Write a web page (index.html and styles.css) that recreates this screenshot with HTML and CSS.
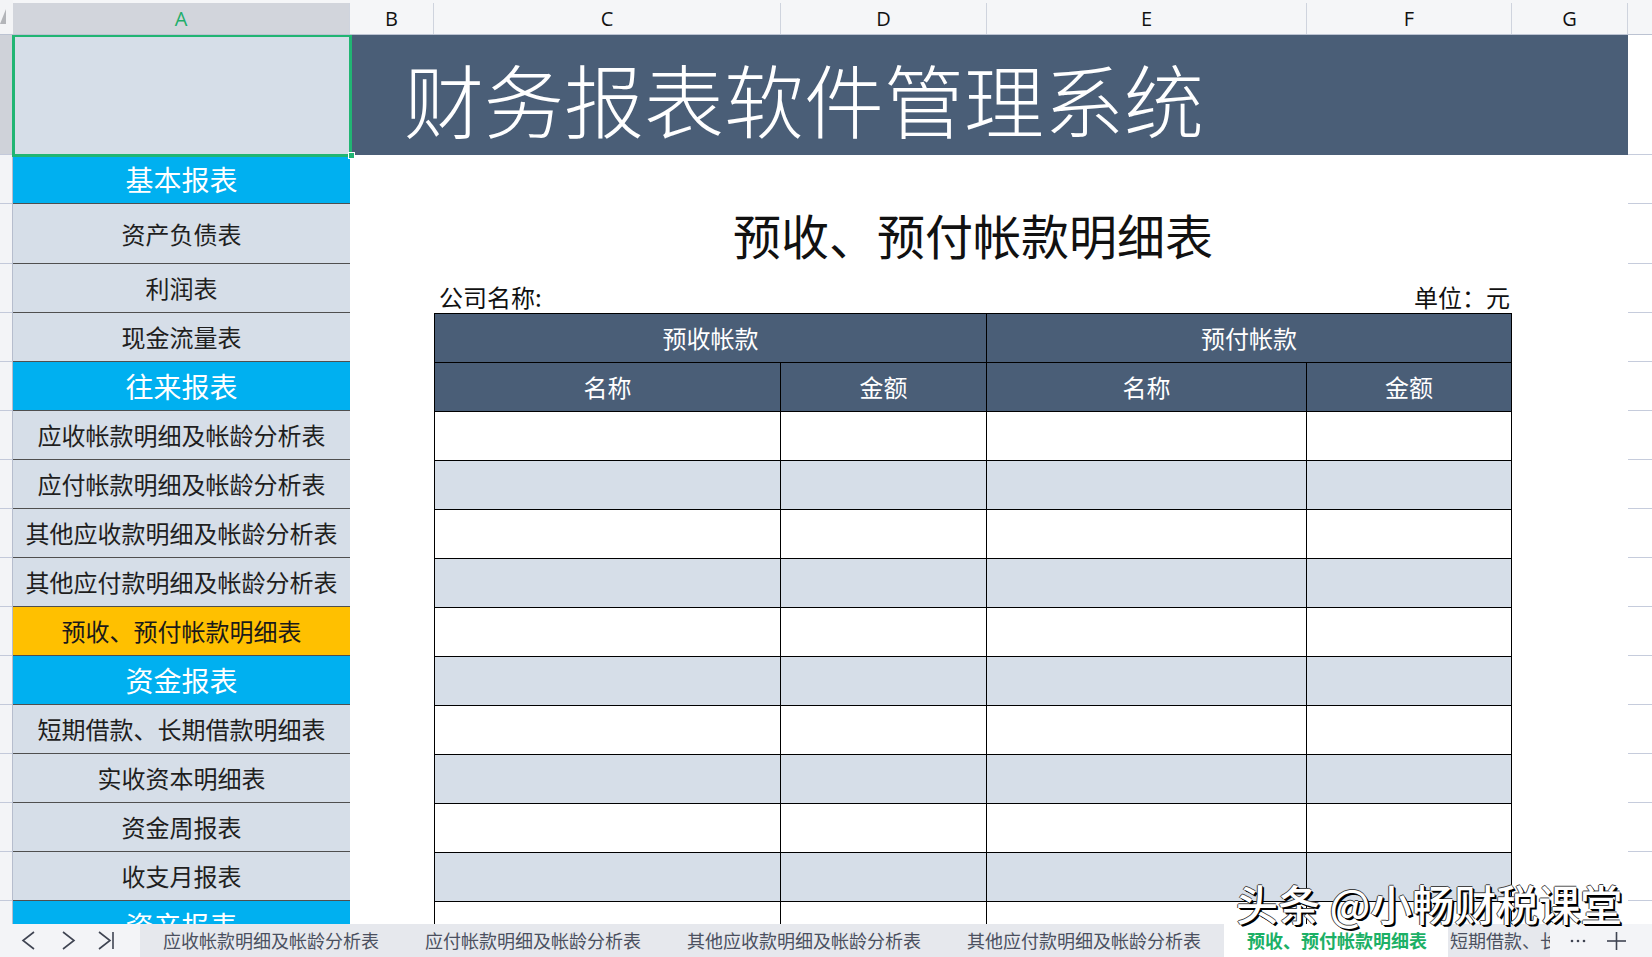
FILE: index.html
```html
<!DOCTYPE html>
<html lang="zh-CN">
<head>
<meta charset="utf-8">
<title>财务报表软件管理系统</title>
<link rel="stylesheet" href="styles.css">
</head>
<body>
<div class="app">
  <div class="colheads">
    <div class="ch corner"><svg width="13" height="32" viewBox="0 0 13 32"><polygon points="0,24 6,9 6,24" fill="#b3b5b9"/></svg></div>
    <div class="ch ch-a">A</div>
    <div class="ch w-b">B</div>
    <div class="ch w-c">C</div>
    <div class="ch w-d">D</div>
    <div class="ch w-e">E</div>
    <div class="ch w-f">F</div>
    <div class="ch w-g">G</div>
    <div class="ch w-rest"></div>
  </div>

  <div class="body">
    <div class="rowheads">
      <div class="rh h120 rh-sel"></div>
      <div class="rh h49"></div>
      <div class="rh h60"></div>
      <div class="rh h49"></div><div class="rh h49"></div><div class="rh h49"></div><div class="rh h49"></div>
      <div class="rh h49"></div><div class="rh h49"></div><div class="rh h49"></div><div class="rh h49"></div>
      <div class="rh h49"></div><div class="rh h49"></div><div class="rh h49"></div><div class="rh h49"></div>
      <div class="rh h49"></div><div class="rh h49"></div>
    </div>

    <div class="colA">
      <div class="ca h120 a1"><span class="handle"></span></div>
      <div class="ca h49 sec">基本报表</div>
      <div class="ca h60">资产负债表</div>
      <div class="ca h49">利润表</div>
      <div class="ca h49">现金流量表</div>
      <div class="ca h49 sec">往来报表</div>
      <div class="ca h49">应收帐款明细及帐龄分析表</div>
      <div class="ca h49">应付帐款明细及帐龄分析表</div>
      <div class="ca h49">其他应收款明细及帐龄分析表</div>
      <div class="ca h49">其他应付款明细及帐龄分析表</div>
      <div class="ca h49 cur">预收、预付帐款明细表</div>
      <div class="ca h49 sec">资金报表</div>
      <div class="ca h49">短期借款、长期借款明细表</div>
      <div class="ca h49">实收资本明细表</div>
      <div class="ca h49">资金周报表</div>
      <div class="ca h49">收支月报表</div>
      <div class="ca h49 sec">资产报表</div>
    </div>

    <div class="main">
      <div class="banner">财务报表软件管理系统</div>
      <div class="content">
        <div class="spacer"></div>
        <div class="title">预收、预付帐款明细表</div>
        <div class="info"><span>公司名称:</span><span>单位：元</span></div>
        <div class="tbl">
          <div class="th span2 first">预收帐款</div>
          <div class="th span2">预付帐款</div>
          <div class="th first">名称</div>
          <div class="th">金额</div>
          <div class="th">名称</div>
          <div class="th">金额</div>

          <div class="td first"></div><div class="td"></div><div class="td"></div><div class="td"></div>
          <div class="td first alt"></div><div class="td alt"></div><div class="td alt"></div><div class="td alt"></div>
          <div class="td first"></div><div class="td"></div><div class="td"></div><div class="td"></div>
          <div class="td first alt"></div><div class="td alt"></div><div class="td alt"></div><div class="td alt"></div>
          <div class="td first"></div><div class="td"></div><div class="td"></div><div class="td"></div>
          <div class="td first alt"></div><div class="td alt"></div><div class="td alt"></div><div class="td alt"></div>
          <div class="td first"></div><div class="td"></div><div class="td"></div><div class="td"></div>
          <div class="td first alt"></div><div class="td alt"></div><div class="td alt"></div><div class="td alt"></div>
          <div class="td first"></div><div class="td"></div><div class="td"></div><div class="td"></div>
          <div class="td first alt"></div><div class="td alt"></div><div class="td alt"></div><div class="td alt"></div>
          <div class="td first"></div><div class="td"></div><div class="td"></div><div class="td"></div>
        </div>
      </div>
    </div>

    <div class="rest">
      <div class="rl h120"></div>
      <div class="rl h49"></div>
      <div class="rl h60"></div>
      <div class="rl h49"></div><div class="rl h49"></div><div class="rl h49"></div><div class="rl h49"></div>
      <div class="rl h49"></div><div class="rl h49"></div><div class="rl h49"></div><div class="rl h49"></div>
      <div class="rl h49"></div><div class="rl h49"></div><div class="rl h49"></div><div class="rl h49"></div>
      <div class="rl h49"></div><div class="rl h49"></div>
    </div>
  </div>

  <div class="tabbar">
    <div class="nav">
      <svg width="140" height="33" viewBox="0 0 140 33">
        <polyline points="34,8 23,16.5 34,25" fill="none" stroke="#3f4452" stroke-width="1.6"/>
        <polyline points="63,8 74,16.5 63,25" fill="none" stroke="#3f4452" stroke-width="1.6"/>
        <polyline points="99,8 110,16.5 99,25" fill="none" stroke="#3f4452" stroke-width="1.6"/>
        <line x1="113" y1="8" x2="113" y2="25" stroke="#3f4452" stroke-width="1.6"/>
      </svg>
    </div>
    <div class="tabs">
      <div class="tab">应收帐款明细及帐龄分析表</div>
      <div class="tab">应付帐款明细及帐龄分析表</div>
      <div class="tab">其他应收款明细及帐龄分析表</div>
      <div class="tab">其他应付款明细及帐龄分析表</div>
      <div class="tab active">预收、预付帐款明细表</div>
      <div class="tab next">短期借款、长期借款明细表</div>
    </div>
    <div class="more">
      <svg width="102" height="33" viewBox="0 0 102 33">
        <circle cx="22" cy="17" r="1.3" fill="#3f4452"/>
        <circle cx="28" cy="17" r="1.3" fill="#3f4452"/>
        <circle cx="34" cy="17" r="1.3" fill="#3f4452"/>
        <line x1="57" y1="17" x2="76" y2="17" stroke="#3f4452" stroke-width="1.6"/>
        <line x1="66.5" y1="8" x2="66.5" y2="26" stroke="#3f4452" stroke-width="1.6"/>
      </svg>
    </div>
  </div>

  <div class="watermark">头条 @小畅财税课堂</div>
</div>
</body>
</html>
```

FILE: styles.css
```css
* { box-sizing: border-box; }

html, body {
  margin: 0;
  padding: 0;
  background: #ffffff;
}

body {
  font-family: "Noto Sans CJK SC", "Noto Sans", sans-serif;
  overflow: hidden;
}

.app {
  position: relative;
  width: 1652px;
  height: 957px;
  display: flex;
  flex-direction: column;
  overflow: hidden;
}

/* ---------- column headers ---------- */
.colheads {
  height: 35px;
  flex: none;
  display: flex;
  padding-top: 3px;
  background: #f5f6f8;
  border-bottom: 1px solid #bcc3d2;
}

.ch {
  height: 31px;
  flex: none;
  display: flex;
  align-items: center;
  justify-content: center;
  border-right: 1px solid #cfd4de;
  font-family: "Open Sans", "Noto Sans", sans-serif;
  font-size: 20px;
  color: #111;
  line-height: 1;
}

.corner {
  width: 13px;
  margin-top: -3px;
  height: 34px;
  border-right: none;
  background: #f3f4f6;
  align-items: flex-start;
  justify-content: flex-start;
}

.ch-a { width: 337px; background: #d2d5dc; color: #1fae6a; }
.w-b { width: 84px; }
.w-c { width: 347px; }
.w-d { width: 206px; }
.w-e { width: 320px; }
.w-f { width: 205px; }
.w-g { width: 116px; }
.w-rest { width: 24px; border-right: none; }

/* ---------- body ---------- */
.body {
  flex: none;
  height: 889px;
  display: flex;
  overflow: hidden;
}

.h120 { height: 120px; }
.h60 { height: 60px; }
.h49 { height: 49px; }

.rowheads {
  width: 13px;
  flex: none;
  background: #f3f4f7;
  border-right: 1px solid #b6bdcd;
}

.rh {
  border-bottom: 1px solid #c3c9da;
}

.rh-sel { background: #cfd2d9; }

/* column A navigation */
.colA {
  width: 337px;
  flex: none;
  display: flex;
  flex-direction: column;
}

.ca {
  flex: none;
  display: flex;
  align-items: center;
  justify-content: center;
  background: #d6dee8;
  border-bottom: 1px solid #4f4f4f;
  font-size: 24px;
  line-height: 1;
  color: #1f1f1f;
  white-space: nowrap;
}

.ca.sec {
  background: #00b0f0;
  color: #ffffff;
  font-size: 28px;
}

.ca.cur {
  background: #ffc000;
  color: #1a1a1a;
}

.a1 {
  position: relative;
  border-bottom: none;
}

.a1::after {
  content: "";
  position: absolute;
  left: -1px;
  top: -1px;
  right: -2px;
  bottom: -2px;
  border: 3px solid #21b573;
  z-index: 2;
}

.handle {
  position: absolute;
  right: -5px;
  bottom: -4px;
  width: 7px;
  height: 7px;
  background: #21b573;
  border: 1px solid #ffffff;
  z-index: 3;
}

/* ---------- main sheet area ---------- */
.main {
  width: 1278px;
  flex: none;
  display: flex;
  flex-direction: column;
  background: #ffffff;
}

.banner {
  height: 120px;
  flex: none;
  background: #4a5e77;
  color: #ffffff;
  font-size: 80px;
  font-weight: 300;
  line-height: 120px;
  padding: 2px 0 0 54px;
  white-space: nowrap;
}

.content {
  padding-left: 84px;
  width: 1162px;
  display: flex;
  flex-direction: column;
}

.spacer { height: 49px; flex: none; }

.title {
  height: 60px;
  flex: none;
  display: flex;
  align-items: center;
  justify-content: center;
  font-size: 48px;
  font-weight: 400;
  line-height: 1;
  color: #111;
}

.info {
  height: 49px;
  flex: none;
  display: flex;
  justify-content: space-between;
  align-items: flex-end;
  padding: 0 2px 4px 5px;
  font-size: 24px;
  line-height: 24px;
  color: #111;
}

/* table */
.tbl {
  display: grid;
  grid-template-columns: 347px 206px 320px 205px;
  grid-auto-rows: 49px;
  border-top: 1px solid #000;
}

.th, .td {
  border-right: 1px solid #000;
  border-bottom: 1px solid #000;
}

.first { border-left: 1px solid #000; }

.th {
  background: #4a5e77;
  color: #ffffff;
  display: flex;
  align-items: center;
  justify-content: center;
  font-size: 24px;
  line-height: 1;
}

.span2 { grid-column: span 2; }

.td { background: #ffffff; }
.td.alt { background: #d6dee8; }

/* right strip beyond column G */
.rest {
  width: 24px;
  flex: none;
  background: #ffffff;
}

.rl { border-bottom: 1px solid #c6ccdc; }

/* ---------- sheet tabs ---------- */
.tabbar {
  flex: none;
  height: 33px;
  display: flex;
  background: #e6e8ed;
}

.nav {
  width: 140px;
  flex: none;
  background: #f3f4f7;
}

.nav svg, .more svg { display: block; }

.tabs {
  width: 1410px;
  flex: none;
  display: flex;
  overflow: hidden;
  white-space: nowrap;
}

.tab {
  flex: none;
  padding: 0 23px;
  font-size: 18px;
  line-height: 33px;
  color: #4b5060;
}

.tab.active {
  background: #ffffff;
  color: #1cb066;
  font-weight: 700;
  padding: 0 21px 0 23px;
}

.tab.next { padding-left: 2px; }

.more {
  width: 102px;
  flex: none;
  background: #f3f4f7;
}

/* ---------- watermark overlay ---------- */
.watermark {
  position: absolute;
  left: 1236px;
  top: 882px;
  font-size: 42px;
  line-height: 1;
  font-weight: 500;
  color: #ffffff;
  white-space: nowrap;
  text-shadow: 2px 2px 0 #000, 1px 1px 0 #000, -1px 0 0 #444, 0 -1px 0 #444;
  z-index: 5;
}
```
